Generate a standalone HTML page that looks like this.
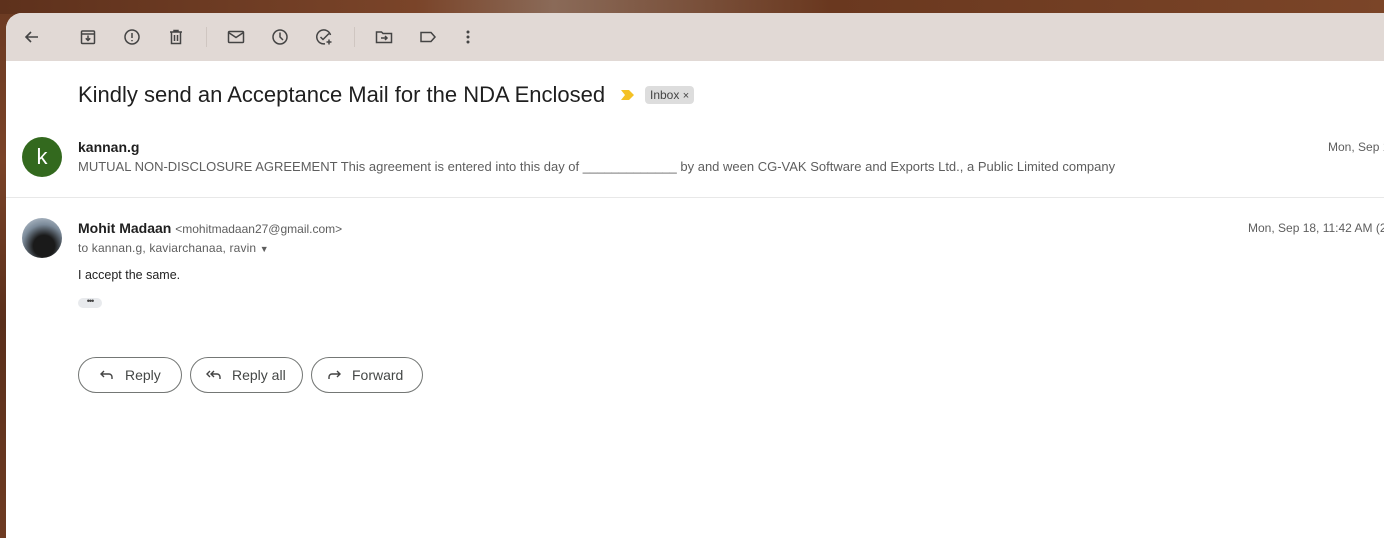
<!DOCTYPE html>
<html><head><meta charset="utf-8"><style>
*{margin:0;padding:0;box-sizing:border-box}
body{width:1384px;height:538px;overflow:hidden;font-family:"Liberation Sans",Arial,sans-serif;background:linear-gradient(180deg,#6b3a22,#7a4328 30%,#5a2f1b 60%,#6e3b22);position:relative}
.top{position:absolute;left:0;top:0;width:1384px;height:14px;background:linear-gradient(90deg,#5e311c,#7a4429 30%,#8a6a58 40%,#6a381f 60%,#7b4528)}
.panel{position:absolute;left:6px;top:13px;width:1378px;height:525px;background:#fff;border-top-left-radius:16px;overflow:hidden}
.tb{height:48px;background:#e1d9d5;position:relative}
.ic{position:absolute;top:14px;width:20px;height:20px}
.sep{position:absolute;top:14px;width:1px;height:20px;background:#cfc6c1}
svg{display:block}
.abs{position:absolute;white-space:nowrap}
.btn{position:absolute;top:344px;height:36px;border:1px solid #747775;border-radius:18px;font-size:14px;color:#444746;display:flex;align-items:center}
</style></head><body>
<div class="top"></div>
<div class="panel">
 <div class="tb">
  <svg class="ic" style="left:16px" viewBox="0 0 20 20" fill="none" stroke="#444" stroke-width="1.6"><path d="M16 10H4M9 5l-5 5 5 5"/></svg>
  <svg class="ic" style="left:72px" viewBox="0 0 20 20" fill="none" stroke="#444" stroke-width="1.5"><rect x="3.5" y="4" width="13" height="12.5" rx="1"/><path d="M3.5 7h13M10 8.5v5M7.8 11.3l2.2 2.2 2.2-2.2"/></svg>
  <svg class="ic" style="left:116px" viewBox="0 0 20 20" fill="none" stroke="#444" stroke-width="1.5"><circle cx="10" cy="10" r="7"/><path d="M10 6v5M10 13v1.3"/></svg>
  <svg class="ic" style="left:160px" viewBox="0 0 20 20" fill="none" stroke="#444" stroke-width="1.5"><path d="M4 5h12M8 5V3.5h4V5M5.5 5v11.5h9V5M8.5 8v6M11.5 8v6"/></svg>
  <div class="sep" style="left:200px"></div>
  <svg class="ic" style="left:220px" viewBox="0 0 20 20" fill="none" stroke="#444" stroke-width="1.5"><rect x="2.5" y="4.5" width="15" height="11" rx="1"/><path d="M2.5 5.5l7.5 5 7.5-5"/></svg>
  <svg class="ic" style="left:264px" viewBox="0 0 20 20" fill="none" stroke="#444" stroke-width="1.5"><circle cx="10" cy="10" r="7"/><path d="M10 5.5V10l3 3"/></svg>
  <svg class="ic" style="left:308px" viewBox="0 0 20 20" fill="none" stroke="#444" stroke-width="1.5"><path d="M16.5 8A7 7 0 1 0 11 16.8"/><path d="M6.5 10l2.5 2.5 6-6M15 12.5v5M12.5 15h5"/></svg>
  <div class="sep" style="left:348px"></div>
  <svg class="ic" style="left:368px" viewBox="0 0 20 20" fill="none" stroke="#444" stroke-width="1.5"><path d="M2.5 5h5l1.5 1.5h8.5v9h-15z"/><path d="M7 11h6M11 9l2 2-2 2"/></svg>
  <svg class="ic" style="left:412px" viewBox="0 0 20 20" fill="none" stroke="#444" stroke-width="1.5"><path d="M3 5.5h10l4 4.5-4 4.5H3z"/></svg>
  <svg class="ic" style="left:452px" viewBox="0 0 20 20" fill="#444"><circle cx="10" cy="5" r="1.5"/><circle cx="10" cy="10" r="1.5"/><circle cx="10" cy="15" r="1.5"/></svg>
 </div>
 <div class="abs" style="left:72px;top:69px;font-size:22px;color:#1f1f1f">Kindly send an Acceptance Mail for the NDA Enclosed</div>
 <svg class="abs" style="left:614px;top:76px" width="16" height="12" viewBox="0 0 16 12"><path d="M1 1h8l5 5-5 5H1l4-5z" fill="#f4c125"/></svg>
 <div class="abs" style="left:639px;top:73px;height:18px;padding:0 5px;background:#ddd;border-radius:4px;font-size:12px;color:#444;line-height:18px">Inbox <span style="font-size:11px">×</span></div>

 <div class="abs" style="left:16px;top:124px;width:40px;height:40px;border-radius:50%;background:#33691e;color:#fff;font-size:22px;text-align:center;line-height:40px">k</div>
 <div class="abs" style="left:72px;top:126px;font-size:14px;font-weight:bold;color:#1f1f1f">kannan.g</div>
 <div class="abs" style="left:72px;top:146px;font-size:13px;color:#5e5e5e">MUTUAL NON-DISCLOSURE AGREEMENT This agreement is entered into this day of _____________ by and ween CG-VAK Software and Exports Ltd., a Public Limited company</div>
 <div class="abs" style="left:1322px;top:127px;font-size:12px;color:#5e5e5e">Mon, Sep 1</div>
 <div class="abs" style="left:0;top:184px;width:1378px;height:1px;background:#e8e8e8"></div>

 <div class="abs" style="left:16px;top:205px;width:40px;height:40px;border-radius:50%;background:radial-gradient(circle at 55% 70%,#1a1a1a 30%,#7b8a99 60%,#cdd6e0)"></div>
 <div class="abs" style="left:72px;top:207px;font-size:14px;color:#1f1f1f"><b>Mohit Madaan</b> <span style="font-size:12px;color:#5e5e5e">&lt;mohitmadaan27@gmail.com&gt;</span></div>
 <div class="abs" style="left:72px;top:228px;font-size:12px;color:#5e5e5e;letter-spacing:0.15px">to kannan.g, kaviarchanaa, ravin <span style="font-size:9px">▼</span></div>
 <div class="abs" style="left:1242px;top:208px;font-size:12px;color:#5e5e5e">Mon, Sep 18, 11:42 AM (2 d</div>
 <div class="abs" style="left:72px;top:255px;font-size:12.5px;color:#222">I accept the same.</div>
 <div class="abs" style="left:72px;top:285px;width:24px;height:10px;background:#e8eaed;border-radius:5px;font-size:9px;line-height:7px;text-align:center;color:#444;letter-spacing:-1px">•••</div>

 <div class="btn" style="left:72px;width:104px"><svg style="margin-left:20px" width="16" height="16" viewBox="0 0 16 16" fill="none" stroke="#444" stroke-width="1.4"><path d="M5 4L2 7l3 3M2 7h8a3 3 0 0 1 3 3v2"/></svg><span style="margin-left:10px">Reply</span></div>
 <div class="btn" style="left:184px;width:113px"><svg style="margin-left:14px" width="18" height="16" viewBox="0 0 18 16" fill="none" stroke="#444" stroke-width="1.4"><path d="M5 4L2 7l3 3M9 4L6 7l3 3M6 7h6a3 3 0 0 1 3 3v2"/></svg><span style="margin-left:9px">Reply all</span></div>
 <div class="btn" style="left:305px;width:112px"><svg style="margin-left:14px" width="16" height="16" viewBox="0 0 16 16" fill="none" stroke="#444" stroke-width="1.4"><path d="M11 4l3 3-3 3M14 7H6a3 3 0 0 0-3 3v2"/></svg><span style="margin-left:10px">Forward</span></div>
</div>
</body></html>
